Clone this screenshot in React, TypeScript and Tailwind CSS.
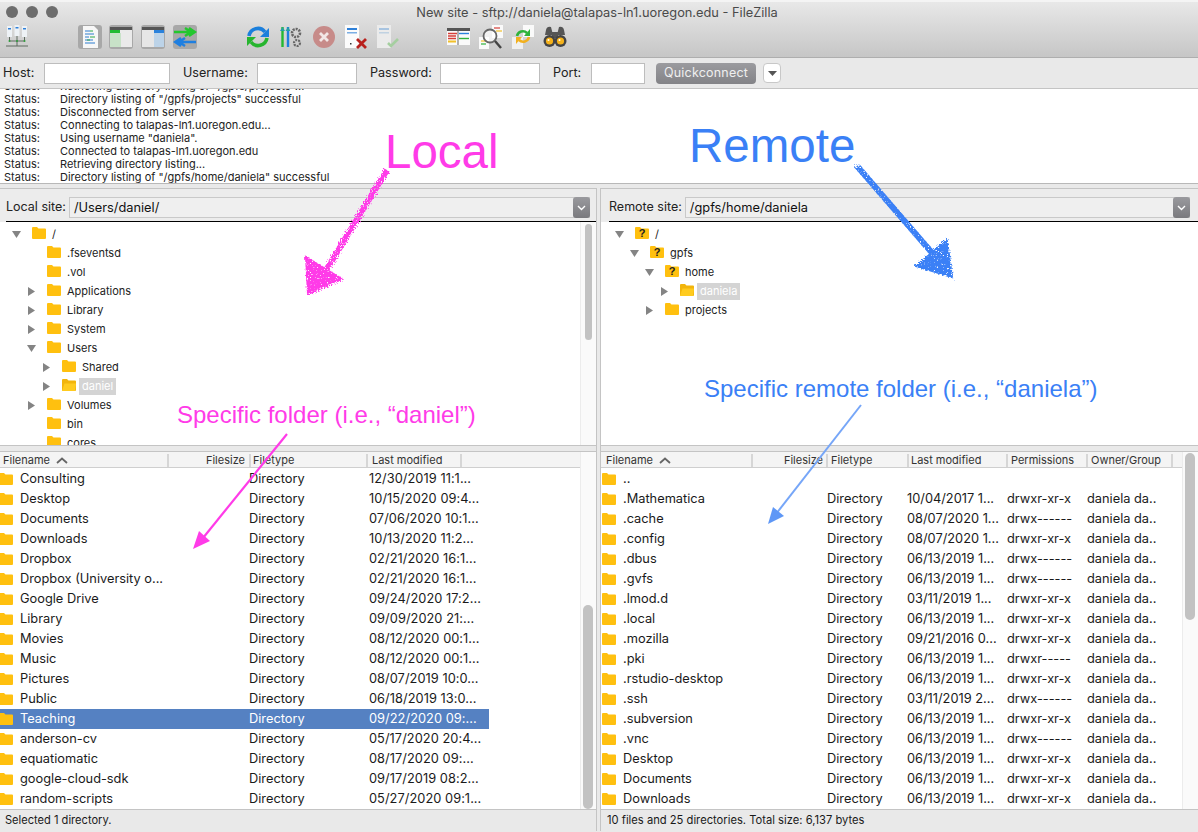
import type { ReactNode } from 'react'

const logLines = [
  'Directory listing of "/gpfs/projects" successful',
  'Disconnected from server',
  'Connecting to talapas-ln1.uoregon.edu...',
  'Using username "daniela".',
  'Connected to talapas-ln1.uoregon.edu',
  'Retrieving directory listing...',
  'Directory listing of "/gpfs/home/daniela" successful',
]

const localFiles = [
  ['Consulting', '12/30/2019 11:1...'],
  ['Desktop', '10/15/2020 09:4...'],
  ['Documents', '07/06/2020 10:1...'],
  ['Downloads', '10/13/2020 11:2...'],
  ['Dropbox', '02/21/2020 16:1...'],
  ['Dropbox (University o...', '02/21/2020 16:1...'],
  ['Google Drive', '09/24/2020 17:2...'],
  ['Library', '09/09/2020 21:...'],
  ['Movies', '08/12/2020 00:1...'],
  ['Music', '08/12/2020 00:1...'],
  ['Pictures', '08/07/2019 10:0...'],
  ['Public', '06/18/2019 13:0...'],
  ['Teaching', '09/22/2020 09:...'],
  ['anderson-cv', '05/17/2020 20:4...'],
  ['equatiomatic', '08/17/2020 09:...'],
  ['google-cloud-sdk', '09/17/2019 08:2...'],
  ['random-scripts', '05/27/2020 09:1...'],
]

const remoteFiles = [
  ['.Mathematica', '10/04/2017 1...', 'drwxr-xr-x'],
  ['.cache', '08/07/2020 1...', 'drwx------'],
  ['.config', '08/07/2020 1...', 'drwxr-xr-x'],
  ['.dbus', '06/13/2019 1...', 'drwx------'],
  ['.gvfs', '06/13/2019 1...', 'drwx------'],
  ['.lmod.d', '03/11/2019 1...', 'drwxr-xr-x'],
  ['.local', '06/13/2019 1...', 'drwxr-xr-x'],
  ['.mozilla', '09/21/2016 0...', 'drwxr-xr-x'],
  ['.pki', '06/13/2019 1...', 'drwxr-----'],
  ['.rstudio-desktop', '06/13/2019 1...', 'drwxr-xr-x'],
  ['.ssh', '03/11/2019 2...', 'drwx------'],
  ['.subversion', '06/13/2019 1...', 'drwxr-xr-x'],
  ['.vnc', '06/13/2019 1...', 'drwx------'],
  ['Desktop', '06/13/2019 1...', 'drwxr-xr-x'],
  ['Documents', '06/13/2019 1...', 'drwxr-xr-x'],
  ['Downloads', '06/13/2019 1...', 'drwxr-xr-x'],
]

function Folder({ open, unknown }: { open?: boolean; unknown?: boolean }) {
  return (
    <svg width="14" height="12" viewBox="0 0 14 12" className="shrink-0">
      <path d="M0 1 Q0 0 1 0 H5 L6.5 1.5 H13 Q14 1.5 14 2.5 V11 Q14 12 13 12 H1 Q0 12 0 11 Z" fill={open ? '#f2b50c' : '#ffc00f'} />
      {open && <path d="M0 12 L2.5 4.5 H14 L13 12 Z" fill="#ffcb1f" />}
      {unknown && (
        <text x="7" y="10" textAnchor="middle" fontSize="11" fontWeight="700" fill="#222" fontFamily="Liberation Sans, sans-serif">?</text>
      )}
    </svg>
  )
}

function Caret({ open }: { open?: boolean }) {
  return (
    <svg width="9" height="9" viewBox="0 0 9 9" className="shrink-0">
      <path d={open ? 'M0 1 H9 L4.5 8 Z' : 'M1 0 L8 4.5 L1 9 Z'} fill="#848484" />
    </svg>
  )
}

function TreeRow({ x, name, caret, open, unknown, selected, folderOpen }: {
  x: number; name: string; caret?: boolean; open?: boolean; unknown?: boolean; selected?: boolean; folderOpen?: boolean
}) {
  return (
    <div className="flex items-center h-[19px]" style={{ paddingLeft: x }}>
      <div className="w-[9px] flex items-center">{caret && <Caret open={open} />}</div>
      <div className="ml-[11px] -mt-[3px]"><Folder unknown={unknown} open={folderOpen} /></div>
      <span className={selected ? 'ml-[3px] px-[3px] bg-[#d4d4d4] text-white' : 'ml-[6px]'}>{name}</span>
    </div>
  )
}

function Sep({ className }: { className: string }) {
  return <div className={`h-[13px] w-[2px] bg-[#d6d6d6] shrink-0 ${className}`} />
}

function SortUp() {
  return (
    <svg width="12" height="7" viewBox="0 0 12 7" className="ml-[6px] shrink-0">
      <path d="M1 6 L6 1.5 L11 6" fill="none" stroke="#666" strokeWidth="1.8" />
    </svg>
  )
}

function SiteBar({ label, path, inputClass }: { label: string; path: string; inputClass: string }) {
  return (
    <div className="h-[33px] bg-[#ececec] border-b border-black flex items-center shrink-0 pt-[5px]">
      <span className="text-[12.5px] text-[#222] shrink-0">{label}</span>
      <div className={`h-[21px] ml-[3px] bg-[#efefef] border border-[#c9c9c9] flex items-center justify-between ${inputClass}`}>
        <span className="text-[12.8px] text-[#111] pl-[4px]">{path}</span>
        <div className="w-[17px] h-[21px] rounded-[3px] bg-gradient-to-b from-[#9a9a9e] to-[#7a7a7e] flex items-center justify-center -mr-[1px]">
          <svg width="9" height="6" viewBox="0 0 9 6"><path d="M1 1 L4.5 4.5 L8 1" fill="none" stroke="#fff" strokeWidth="1.4" /></svg>
        </div>
      </div>
    </div>
  )
}

function Track({ className, thumb }: { className: string; thumb: string }) {
  return (
    <div className={`shrink-0 bg-[#fafafa] border-l border-[#ececec] ${className}`}>
      <div className={`rounded-full bg-[#c2c2c2] ${thumb}`} />
    </div>
  )
}

function Tool({ ml, children }: { ml: string; children: ReactNode }) {
  return (
    <svg width="24" height="24" viewBox="0 0 24 24" className={`shrink-0 ${ml}`}>{children}</svg>
  )
}

function Pressed({ ml, children }: { ml: string; children: ReactNode }) {
  return (
    <div className={`w-[24px] h-[24px] rounded-[3px] bg-[#a8a8a8] shrink-0 ${ml}`}>
      <svg width="24" height="24" viewBox="0 0 24 24">{children}</svg>
    </div>
  )
}

function Toolbar() {
  return (
    <div className="flex items-center h-[26px] pl-[5px] mt-[2px]">
      <Tool ml="">
        <rect x="2" y="1" width="5" height="11" fill="#eef2f6" /><rect x="9.5" y="0" width="5" height="11" fill="#eef2f6" /><rect x="17" y="1" width="5" height="11" fill="#eef2f6" />
        <rect x="3" y="3" width="3" height="1.5" fill="#2f80d8" /><rect x="10.5" y="2" width="3" height="1.5" fill="#2f80d8" /><rect x="18" y="3" width="3" height="1.5" fill="#2f80d8" />
        <path d="M4.5 12 V16 H19.5 V12 M12 11 V21 M1 21 H23" fill="none" stroke="#5e6a60" strokeWidth="1" />
        <circle cx="4.5" cy="16" r="1" fill="#2d9d3a" /><circle cx="12" cy="16" r="1" fill="#2d9d3a" /><circle cx="19.5" cy="16" r="1" fill="#2d9d3a" />
      </Tool>
      <Pressed ml="ml-[49px]">
        <path d="M5 1 H16 L20 5 V23 H5 Z" fill="#f7f7f7" />
        <path d="M7 6 H12 M7 9 H16 M7 12 H11 M7 15 H15 M7 18 H17" stroke="#2f7fd0" strokeWidth="1.2" />
        <path d="M12 6 H15 M12 12 H17 M9 15 H12" stroke="#2da84a" strokeWidth="1.2" />
      </Pressed>
      <Pressed ml="ml-[7px]">
        <rect x="1" y="2" width="22" height="20" fill="#eaeaea" />
        <rect x="1" y="2" width="22" height="3" fill="#555" />
        <rect x="1" y="5" width="10" height="3" fill="#22bb33" />
        <rect x="1" y="8" width="11" height="14" fill="#c8e2c8" />
      </Pressed>
      <Pressed ml="ml-[8px]">
        <rect x="1" y="2" width="22" height="20" fill="#e6e6e6" />
        <rect x="1" y="2" width="22" height="3" fill="#555" />
        <rect x="13" y="5" width="10" height="3" fill="#2a82dc" />
        <rect x="13" y="8" width="10" height="14" fill="#bcd3e8" />
      </Pressed>
      <Pressed ml="ml-[8px]">
        <path d="M1 7 H21 M16 3 L22 7 L16 11 M12 3 L18 7 L12 11" fill="none" stroke="#23c72e" strokeWidth="2.4" />
        <path d="M23 17 H3 M8 13 L2 17 L8 21 M12 13 L6 17 L12 21" fill="none" stroke="#1f7fe0" strokeWidth="2.4" />
      </Pressed>
      <Tool ml="ml-[49px]">
        <path d="M3 11 A9 9 0 0 1 19 7" fill="none" stroke="#1b7fdc" strokeWidth="3.6" />
        <path d="M23 3 V12 H14 Z" fill="#1b7fdc" />
        <path d="M21 13 A9 9 0 0 1 5 17" fill="none" stroke="#27b52f" strokeWidth="3.6" />
        <path d="M1 21 V12 H10 Z" fill="#27b52f" />
      </Tool>
      <Tool ml="ml-[9px]">
        <path d="M3.5 2 V22" stroke="#25b832" strokeWidth="2.4" /><path d="M9 2 V22" stroke="#1f7fe0" strokeWidth="2.4" />
        <path d="M1 6 L3.5 2 L6 6 Z M6.5 6 L9 2 L11.5 6 Z" fill="#25a0a0" />
        <circle cx="17" cy="8" r="4" fill="none" stroke="#666" strokeWidth="2.6" strokeDasharray="2 1" />
        <circle cx="18" cy="18" r="3" fill="none" stroke="#666" strokeWidth="2.2" strokeDasharray="2 1" />
      </Tool>
      <Tool ml="ml-[9px]">
        <circle cx="12" cy="12" r="11" fill="#c78b89" />
        <path d="M8 8 L16 16 M16 8 L8 16" stroke="#f2e7e6" strokeWidth="2.8" />
      </Tool>
      <Tool ml="ml-[7px]">
        <rect x="2" y="0" width="14" height="23" fill="#fbfbfb" />
        <rect x="4" y="3" width="10" height="2" fill="#2f80d8" /><rect x="4" y="7" width="10" height="1.5" fill="#7aaee4" />
        <rect x="7" y="18" width="1.5" height="1.5" fill="#333" />
        <path d="M14 14 L23 23 M23 14 L14 23" stroke="#b8201c" strokeWidth="2.8" />
      </Tool>
      <Tool ml="ml-[8px]">
        <rect x="2" y="0" width="14" height="23" fill="#ebebeb" />
        <rect x="4" y="3" width="10" height="2" fill="#a8c4e0" /><rect x="4" y="7" width="10" height="1.5" fill="#c0d2e2" />
        <path d="M13 18 L16 21 L23 14" fill="none" stroke="#a5cfa0" strokeWidth="2.6" />
      </Tool>
      <Tool ml="ml-[48px]">
        <rect x="0" y="3" width="23" height="17" fill="#fafafa" />
        <rect x="0" y="3" width="23" height="3" fill="#555" />
        <path d="M1 8.5 H10 M1 11 H9 M1 13.5 H9" stroke="#d6403a" strokeWidth="1.4" />
        <path d="M12 8.5 H22" stroke="#2a82dc" strokeWidth="1.4" /><path d="M12 13.5 H22" stroke="#2fb33b" strokeWidth="1.4" />
        <path d="M1 16.5 H9" stroke="#f2c029" strokeWidth="2" /><path d="M11 6 V20" stroke="#666" strokeWidth="1" />
      </Tool>
      <Tool ml="ml-[8px]">
        <rect x="13" y="0" width="11" height="13" fill="#fafafa" /><path d="M15 3 H21" stroke="#d6403a" strokeWidth="1.2" /><path d="M17 6 H23" stroke="#f2c029" strokeWidth="1.2" />
        <rect x="0" y="12" width="10" height="12" fill="#fafafa" /><path d="M2 16 H8" stroke="#f2c029" strokeWidth="1.2" /><path d="M2 19 H7" stroke="#2fb33b" strokeWidth="1.2" />
        <circle cx="11" cy="11" r="6.5" fill="#ffffffb0" stroke="#666" strokeWidth="1.8" />
        <path d="M16 16 L22 23" stroke="#444" strokeWidth="2.4" />
      </Tool>
      <Tool ml="ml-[8px]">
        <rect x="12" y="0" width="11" height="12" fill="#fafafa" /><rect x="1" y="12" width="11" height="12" fill="#f0f0f0" />
        <path d="M6 11 A6 6 0 0 1 16 8" fill="none" stroke="#2fb33b" strokeWidth="2.6" /><path d="M19 4 V11 H13 Z" fill="#2fb33b" />
        <path d="M18 12 A6 6 0 0 1 8 15" fill="none" stroke="#f2b01e" strokeWidth="2.6" /><path d="M5 19 V12 H11 Z" fill="#f2b01e" />
      </Tool>
      <Tool ml="ml-[8px]">
        <path d="M3 5 Q4 1 8 2 L10 10 H2 Z M21 5 Q20 1 16 2 L14 10 H22 Z" fill="#555" /><rect x="9" y="7" width="6" height="6" fill="#555" />
        <circle cx="6.5" cy="16" r="6" fill="#444" /><circle cx="17.5" cy="16" r="6" fill="#444" />
        <circle cx="6.5" cy="16" r="3.6" fill="#f5b21b" /><circle cx="17.5" cy="16" r="3.6" fill="#f5b21b" />
        <circle cx="5.5" cy="15" r="1" fill="#fff" /><circle cx="16.5" cy="15" r="1" fill="#fff" />
      </Tool>
    </div>
  )
}

function Field({ label, labelWidth, width, gap }: { label: string; labelWidth: string; width: string; gap: string }) {
  return (
    <div className={`flex items-center ${gap}`}>
      <span className={`text-[12.6px] text-[#222] mr-[9px] whitespace-nowrap ${labelWidth}`}>{label}</span>
      <div className={`h-[21px] bg-white border border-[#bdbdbd] ${width}`} />
    </div>
  )
}

function Annotations() {
  return (
    <>
      <svg width="1198" height="832" viewBox="0 0 1198 832" className="absolute inset-0 pointer-events-none">
        <defs>
          <filter id="rough" x="-10%" y="-10%" width="120%" height="120%">
            <feTurbulence type="fractalNoise" baseFrequency="0.7" numOctaves="2" seed="4" result="noise" />
            <feDisplacementMap in="SourceGraphic" in2="noise" scale="5" result="moved" />
            <feColorMatrix in="noise" type="matrix" values="0 0 0 0 0  0 0 0 0 0  0 0 0 0 0  7 0 0 0 -1.6" result="mask" />
            <feComposite in="moved" in2="mask" operator="in" />
          </filter>
        </defs>
        <g filter="url(#rough)">
          <path d="M387 170 L325 272" stroke="#ff3be8" strokeWidth="6" fill="none" />
          <path d="M306 257 L342 279 L308 294 Z" fill="#ff3be8" stroke="#ff3be8" strokeWidth="2" />
          <path d="M857 166 L933 254" stroke="#3a80f6" strokeWidth="6" fill="none" />
          <path d="M947 240 L952 277 L916 266 Z" fill="#3a80f6" stroke="#3a80f6" strokeWidth="2" />
        </g>
        <path d="M287 434 L203 538" stroke="#ff3be8" strokeWidth="2.2" fill="none" />
        <path d="M193 549 L199 531 L210 541 Z" fill="#ff3be8" />
        <path d="M861 405 L776 514" stroke="#76a6f8" strokeWidth="2" fill="none" />
        <path d="M768 524 L773 507 L784 516 Z" fill="#5e97f6" />
      </svg>
      <span className="absolute left-[385px] top-[124px] text-[47.5px] leading-[56px] text-[#ff3be8] [font-family:'Liberation_Sans',sans-serif]">Local</span>
      <span className="absolute left-[689px] top-[118px] text-[47.5px] leading-[56px] text-[#3a80f6] [font-family:'Liberation_Sans',sans-serif]">Remote</span>
      <span className="absolute left-[177px] top-[401px] text-[24px] leading-[28px] text-[#ff3be8] whitespace-nowrap [font-family:'Liberation_Sans',sans-serif]">Specific folder (i.e., “daniel”)</span>
      <span className="absolute left-[704px] top-[375px] text-[24px] leading-[28px] text-[#3a80f6] whitespace-nowrap [font-family:'Liberation_Sans',sans-serif]">Specific remote folder (i.e., “daniela”)</span>
    </>
  )
}

export default function App() {
  return (
    <div className="relative w-[1198px] h-[832px] overflow-hidden bg-[#e9e9e9] text-[#1a1a1a] [font-family:Inter,sans-serif]">
      {/* Title bar and toolbar */}
      <div className="h-[58px] bg-gradient-to-b from-[#e8e8e8] to-[#c6c6c6] border-b border-[#aeaeae] border-t-2 border-t-[#f4f4f4]">
        <div className="relative h-[20px] flex items-center justify-center pt-[2px] pr-[4px]">
          <div className="absolute left-[6px] top-[4px] flex gap-[8px]">
            <div className="w-[12px] h-[12px] rounded-full bg-[#6d6d6d]" />
            <div className="w-[12px] h-[12px] rounded-full bg-[#6d6d6d]" />
            <div className="w-[12px] h-[12px] rounded-full bg-[#6d6d6d]" />
          </div>
          <span className="text-[12.8px] text-[#4a4a4a]">New site - sftp://daniela@talapas-ln1.uoregon.edu - FileZilla</span>
        </div>
        <Toolbar />
      </div>

      {/* Quickconnect */}
      <div className="h-[31px] flex items-center pl-[3px] border-b border-[#c4c4c4]">
        <Field label="Host:" labelWidth="w-[32px]" width="w-[126px]" gap="" />
        <Field label="Username:" labelWidth="w-[65px]" width="w-[100px]" gap="ml-[13px]" />
        <Field label="Password:" labelWidth="w-[61px]" width="w-[100px]" gap="ml-[13px]" />
        <Field label="Port:" labelWidth="w-[29px]" width="w-[54px]" gap="ml-[13px]" />
        <button className="ml-[11px] w-[100px] h-[21px] rounded-[4px] bg-gradient-to-b from-[#9b9b9f] to-[#838387] text-[12.5px] text-[#efefef] tracking-[0.2px]">Quickconnect</button>
        <div className="ml-[7px] w-[18px] h-[20px] rounded-[4px] bg-white border border-[#c8c8c8] flex items-center justify-center">
          <svg width="9" height="5" viewBox="0 0 9 5"><path d="M0 0 H9 L4.5 5 Z" fill="#555" /></svg>
        </div>
      </div>

      {/* Message log */}
      <div className="h-[95px] bg-white border-b border-[#b8b8b8] overflow-hidden text-[11px] leading-[13px] text-[#222]">
        <div className="-mt-[9px] pl-[4px]">
          <div className="flex h-[13px]"><span className="w-[56px]">Status:</span><span>Retrieving directory listing of "/gpfs/projects"...</span></div>
          {logLines.map((line, i) => (
            <div key={i} className="flex h-[13px]"><span className="w-[56px]">Status:</span><span>{line}</span></div>
          ))}
        </div>
      </div>

      <div className="flex h-[647px] pt-[4px] gap-[3px]">
        {/* Local pane */}
        <div className="w-[597px] flex flex-col shrink-0 border-r border-[#c4c4c4]">
          <div className="border-t border-[#c4c4c4] pl-[6px] bg-[#ececec]">
            <SiteBar label="Local site:" path="/Users/daniel/" inputClass="w-[521px]" />
          </div>
          <div className="h-[223px] bg-white flex text-[11px] text-[#222] overflow-hidden">
            <div className="flex-1 pt-[3px] overflow-hidden">
              <TreeRow x={12} name="/" caret open />
              <TreeRow x={27} name=".fseventsd" />
              <TreeRow x={27} name=".vol" />
              <TreeRow x={27} name="Applications" caret />
              <TreeRow x={27} name="Library" caret />
              <TreeRow x={27} name="System" caret />
              <TreeRow x={27} name="Users" caret open />
              <TreeRow x={42} name="Shared" caret />
              <TreeRow x={42} name="daniel" caret selected folderOpen />
              <TreeRow x={27} name="Volumes" caret />
              <TreeRow x={27} name="bin" />
              <TreeRow x={27} name="cores" />
            </div>
            <Track className="w-[16px] px-[4px] pt-[2px]" thumb="h-[116px]" />
          </div>
          <div className="h-[6px] border-t border-[#c4c4c4] shrink-0" />
          <div className="flex-1 flex bg-white overflow-hidden border-t border-[#c4c4c4]">
            <div className="flex-1 flex flex-col min-w-0">
              <div className="h-[16px] bg-[#f4f4f4] border-b border-[#cfcfcf] flex items-center text-[11px] text-[#333] shrink-0 pl-[3px] pt-[1px]">
                <span>Filename</span><SortUp />
                <Sep className="ml-[99px]" />
                <span className="w-[76px] text-right">Filesize</span>
                <Sep className="ml-[4px]" />
                <span className="w-[115px] pl-[2px]">Filetype</span>
                <Sep className="" />
                <span className="w-[92px] pl-[4px]">Last modified</span>
                <Sep className="" />
              </div>
              <div className="flex-1 text-[12.8px] leading-[20px] overflow-hidden pt-[1px]">
                {localFiles.map(([name, date]) => (
                  <div key={name} className={name === 'Teaching' ? 'flex items-center h-[20px] w-[489px] bg-[#5581c2] text-white' : 'flex items-center h-[20px] w-[489px]'}>
                    <div className="-ml-[1px] w-[21px]"><Folder /></div>
                    <span className="w-[229px] whitespace-nowrap">{name}</span>
                    <span className="w-[120px]">Directory</span>
                    <span className="whitespace-nowrap tracking-[0.05px]">{date}</span>
                  </div>
                ))}
              </div>
            </div>
            <Track className="w-[16px] px-[2px]" thumb="h-[204px] mt-[153px] w-[10px]" />
          </div>
          <div className="h-[22px] bg-[#e9e9e9] border-t border-[#c4c4c4] text-[11.1px] flex items-center pl-[5px] shrink-0">Selected 1 directory.</div>
        </div>

        {/* Remote pane */}
        <div className="flex-1 flex flex-col min-w-0 border-l border-[#c4c4c4]">
          <div className="border-t border-[#c4c4c4]">
            <div className="pl-[8px] bg-[#ececec]">
              <SiteBar label="Remote site:" path="/gpfs/home/daniela" inputClass="w-[505px]" />
            </div>
          </div>
          <div className="h-[223px] bg-white text-[11px] text-[#222] overflow-hidden pt-[3px]">
            <TreeRow x={14} name="/" caret open unknown />
            <TreeRow x={29} name="gpfs" caret open unknown />
            <TreeRow x={44} name="home" caret open unknown />
            <TreeRow x={59} name="daniela" caret selected folderOpen />
            <TreeRow x={44} name="projects" caret />
          </div>
          <div className="h-[6px] border-t border-[#c4c4c4] shrink-0" />
          <div className="flex-1 flex bg-white overflow-hidden border-t border-[#c4c4c4]">
            <div className="flex-1 flex flex-col min-w-0">
              <div className="h-[16px] bg-[#f4f4f4] border-b border-[#cfcfcf] flex items-center text-[11px] text-[#333] shrink-0 pl-[5px] pt-[1px]">
                <span>Filename</span><SortUp />
                <Sep className="ml-[80px]" />
                <span className="w-[70px] text-right">Filesize</span>
                <Sep className="ml-[3px]" />
                <span className="w-[79px] pl-[3px]">Filetype</span>
                <Sep className="" />
                <span className="w-[97px] pl-[2px]">Last modified</span>
                <Sep className="" />
                <span className="w-[78px] pl-[3px]">Permissions</span>
                <Sep className="" />
                <span className="w-[83px] pl-[3px]">Owner/Group</span>
                <Sep className="" />
              </div>
              <div className="flex-1 text-[12.8px] leading-[20px] overflow-hidden pt-[1px]">
                <div className="flex items-center h-[20px] pl-[1px]">
                  <div className="w-[21px]"><Folder /></div><span>..</span>
                </div>
                {remoteFiles.map(([name, date, perms]) => (
                  <div key={name} className="flex items-center h-[20px] pl-[1px]">
                    <div className="w-[21px]"><Folder /></div>
                    <span className="w-[204px] whitespace-nowrap">{name}</span>
                    <span className="w-[80px]">Directory</span>
                    <span className="w-[100px] whitespace-nowrap">{date}</span>
                    <span className="w-[80px] whitespace-nowrap">{perms}</span>
                    <span className="whitespace-nowrap">daniela da..</span>
                  </div>
                ))}
              </div>
            </div>
            <Track className="w-[16px] px-[2px]" thumb="h-[167px] mt-[1px] w-[10px]" />
          </div>
          <div className="h-[22px] bg-[#e9e9e9] border-t border-[#c4c4c4] text-[11.2px] flex items-center pl-[6px] shrink-0">10 files and 25 directories. Total size: 6,137 bytes</div>
        </div>
      </div>

      <Annotations />
    </div>
  )
}
